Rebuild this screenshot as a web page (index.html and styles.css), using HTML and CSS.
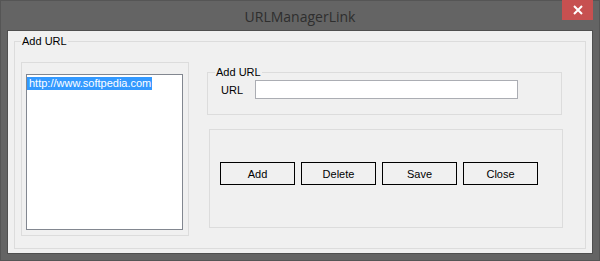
FILE: index.html
```html
<!DOCTYPE html>
<html lang="en">
<head>
    <meta charset="UTF-8">
    <title>URLManagerLink</title>
    <link rel="stylesheet" href="styles.css">
</head>
<body>
    <div class="window">
        <div class="titlebar">
            <span class="title">URLManagerLink</span>
            <button class="close-btn" title="Close">
                <svg width="10" height="10" viewBox="0 0 10 10">
                    <path d="M1 1 L9 9 M9 1 L1 9" stroke="#fff" stroke-width="2"/>
                </svg>
            </button>
        </div>

        <div class="client">
            <div class="groupbox main-group">
                <span class="caption">Add URL</span>
                <div class="group-body">
                    <div class="panel list-panel">
                        <div class="listbox">
                            <div class="list-item selected">http://www.softpedia.com</div>
                        </div>
                    </div>

                    <div class="right-col">
                        <div class="groupbox url-group">
                            <span class="caption">Add URL</span>
                            <div class="url-row">
                                <label for="url">URL</label>
                                <input type="text" id="url" class="textbox">
                            </div>
                        </div>

                        <div class="panel button-panel">
                            <button class="btn">Add</button>
                            <button class="btn">Delete</button>
                            <button class="btn">Save</button>
                            <button class="btn">Close</button>
                        </div>
                    </div>
                </div>
            </div>
        </div>
    </div>
</body>
</html>
```

FILE: styles.css
```css
* {
    box-sizing: border-box;
}
body {
    margin: 0;
    background-color: #5f5f5f;
    font-family: "Liberation Sans", Arial, sans-serif;
    font-size: 11px;
    color: #000;
}
.window {
    width: 600px;
    height: 261px;
    background-color: #646464;
    border: 1px solid #555;
    display: flex;
    flex-direction: column;
}
.titlebar {
    height: 29px;
    display: grid;
    grid-template-columns: 1fr auto 1fr;
    align-items: center;
}
.title {
    grid-column: 2;
    font-family: "Open Sans", "Noto Sans", sans-serif;
    font-size: 14px;
    color: #2e2e2e;
    padding-top: 1px;
}
.close-btn {
    grid-column: 3;
    justify-self: end;
    align-self: start;
    width: 31px;
    height: 20px;
    margin-right: 6px;
    margin-top: -1px;
    border: none;
    padding: 0;
    background-color: #c75050;
    display: flex;
    align-items: center;
    justify-content: center;
}
.client {
    margin: 0 6px;
    height: 224px;
    background-color: #f0f0f0;
    border: 1px solid #4f4f4f;
    padding: 10px 6px 0 6px;
}
.groupbox {
    border: 1px solid #dcdcdc;
}
.caption {
    display: block;
    width: fit-content;
    line-height: 13px;
    margin: -7px 0 0 6px;
    padding: 0 1px;
    background-color: #f0f0f0;
}
.main-group {
    height: 208px;
}
.group-body {
    display: flex;
    padding: 14px 0 0 6px;
}
.panel {
    border: 1px solid #dcdcdc;
}
.list-panel {
    width: 168px;
    height: 174px;
    padding: 11px 0 0 4px;
}
.listbox {
    width: 157px;
    height: 156px;
    background-color: #fff;
    border: 1px solid #828790;
    padding: 2px 0 0 0;
}
.list-item {
    line-height: 13px;
    padding: 0 1px 0 2px;
    width: fit-content;
}
.list-item.selected {
    background-color: #3399ff;
    color: #fff;
}
.right-col {
    margin-left: 18px;
    padding-top: 10px;
}
.url-group {
    width: 355px;
    height: 43px;
}
.url-group .caption {
    margin-left: 7px;
}
.url-row {
    display: flex;
    align-items: center;
    gap: 12px;
    padding-left: 13px;
    margin-top: 1px;
}
.textbox {
    width: 263px;
    height: 19px;
    border: 1px solid #abadb3;
    background-color: #fff;
    font-family: inherit;
    font-size: 11px;
    padding: 0 2px;
    outline: none;
}
.button-panel {
    width: 354px;
    height: 99px;
    margin: 14px 0 0 2px;
    display: flex;
    gap: 6px;
    padding: 32px 0 0 10px;
}
.btn {
    width: 75px;
    height: 23px;
    border: 1px solid #000;
    background-color: #f0f0f0;
    font-family: inherit;
    font-size: 11px;
    color: #000;
    padding: 0;
}
```
